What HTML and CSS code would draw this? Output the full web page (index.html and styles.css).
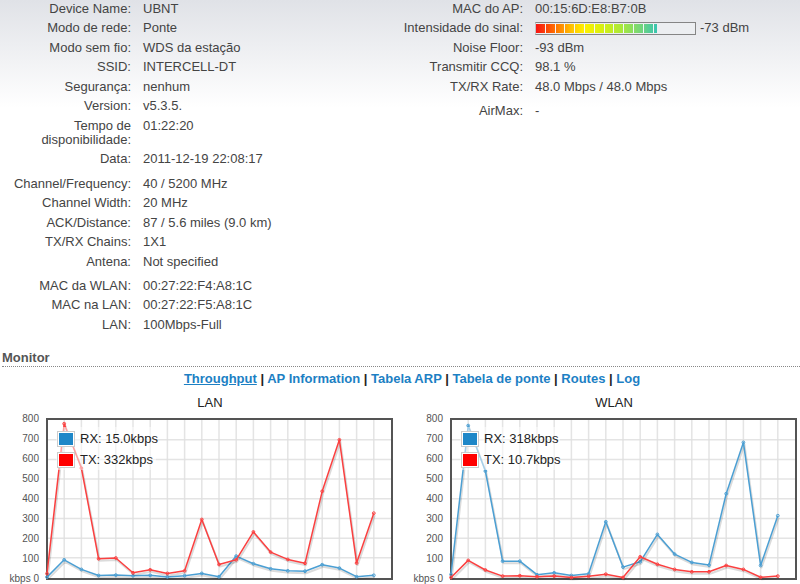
FILE: index.html
```html
<!DOCTYPE html>
<html lang="pt">
<head>
<meta charset="utf-8">
<title>UBNT</title>
<link rel="stylesheet" href="styles.css">
</head>
<body>
<main>
  <section class="status">
    <div class="column">
      <dl>
        <div class="row"><dt>Device Name:</dt><dd>UBNT</dd></div>
        <div class="row"><dt>Modo de rede:</dt><dd>Ponte</dd></div>
        <div class="row"><dt>Modo sem fio:</dt><dd>WDS da estação</dd></div>
        <div class="row"><dt>SSID:</dt><dd>INTERCELL-DT</dd></div>
        <div class="row"><dt>Segurança:</dt><dd>nenhum</dd></div>
        <div class="row"><dt>Version:</dt><dd>v5.3.5.</dd></div>
        <div class="row"><dt>Tempo de disponibilidade:</dt><dd>01:22:20</dd></div>
        <div class="row"><dt>Data:</dt><dd>2011-12-19 22:08:17</dd></div>
      </dl>
      <dl>
        <div class="row"><dt>Channel/Frequency:</dt><dd>40 / 5200 MHz</dd></div>
        <div class="row"><dt>Channel Width:</dt><dd>20 MHz</dd></div>
        <div class="row"><dt>ACK/Distance:</dt><dd>87 / 5.6 miles (9.0 km)</dd></div>
        <div class="row"><dt>TX/RX Chains:</dt><dd>1X1</dd></div>
        <div class="row"><dt>Antena:</dt><dd>Not specified</dd></div>
      </dl>
      <dl>
        <div class="row"><dt>MAC da WLAN:</dt><dd>00:27:22:F4:A8:1C</dd></div>
        <div class="row"><dt>MAC na LAN:</dt><dd>00:27:22:F5:A8:1C</dd></div>
        <div class="row"><dt>LAN:</dt><dd>100Mbps-Full</dd></div>
      </dl>
    </div>
    <div class="column">
      <dl>
        <div class="row"><dt>MAC do AP:</dt><dd>00:15:6D:E8:B7:0B</dd></div>
        <div class="row"><dt>Intensidade do sinal:</dt><dd class="signal"><span class="signal-bar"><span class="signal-fill"></span></span>-73 dBm</dd></div>
        <div class="row"><dt>Noise Floor:</dt><dd>-93 dBm</dd></div>
        <div class="row"><dt>Transmitir CCQ:</dt><dd>98.1 %</dd></div>
        <div class="row"><dt>TX/RX Rate:</dt><dd>48.0 Mbps / 48.0 Mbps</dd></div>
      </dl>
      <dl>
        <div class="row"><dt>AirMax:</dt><dd>-</dd></div>
      </dl>
    </div>
  </section>

  <section class="monitor">
    <h2>Monitor</h2>
    <nav>
      <a class="active" href="#throughput">Throughput</a> |
      <a href="#ap">AP Information</a> |
      <a href="#arp">Tabela ARP</a> |
      <a href="#bridge">Tabela de ponte</a> |
      <a href="#routes">Routes</a> |
      <a href="#log">Log</a>
    </nav>
    <div class="charts">
      <figure>
        <figcaption>LAN</figcaption>
        <svg class="chart" id="lan" viewBox="0 0 394 172"></svg>
      </figure>
      <figure>
        <figcaption>WLAN</figcaption>
        <svg class="chart" id="wlan" viewBox="0 0 394 172"></svg>
      </figure>
    </div>
  </section>
</main>
<script src="charts.js"></script>
</body>
</html>
```
FILE: styles.css
```css
body {
  margin: 0;
  background: #fff linear-gradient(#e0e2e7, #fff 108px) no-repeat;
  font-family: "Liberation Sans", Arial, sans-serif;
  font-size: 13px;
  line-height: 14px;
  color: #444;
}

main {
  overflow: hidden;
}

.status {
  display: grid;
  grid-template-columns: 1fr 1fr;
  padding: 2px 16px 0 0;
}

dl {
  margin: 0 0 5px;
}

.row {
  display: grid;
  grid-template-columns: 131px 1fr;
  column-gap: 12px;
  padding-bottom: 5px;
}

.row:nth-child(even) {
  padding-bottom: 6px;
}

dt {
  text-align: right;
}

dd {
  margin: 0;
}

.signal {
  display: flex;
  align-items: center;
  gap: 4px;
  white-space: nowrap;
}

.signal-bar {
  box-sizing: border-box;
  width: 161px;
  height: 13px;
  padding: 1px 0;
  border: 1px solid #858585;
  border-left-color: #c4c4c4;
  background: #eceef1;
}

.signal-fill {
  display: block;
  width: 121px;
  height: 9px;
  background:
    repeating-linear-gradient(90deg, transparent 0 7.3%, #f4f5f6 7.3% 8.1%),
    linear-gradient(90deg, #f81414, #ff6a00 18px, #ffc400 36px, #fff000 48px, #d8f010 66px, #a8e83c 86px, #70d480 106px, #38c4b0);
}

h2 {
  margin: 9px 0 0 2px;
  padding-bottom: 1px;
  border-bottom: 1px dotted #888;
  font-size: 13px;
  line-height: 14px;
  color: #555;
}

nav {
  padding: 5px 0 0 24px;
  text-align: center;
  font-weight: bold;
  color: #222;
}

a {
  color: #1c80c4;
  text-decoration: none;
}

.active {
  text-decoration: underline;
}

.charts {
  display: grid;
  grid-template-columns: 1fr 1fr;
  column-gap: 10px;
  padding: 10px 2px 0 0;
}

figure {
  margin: 0;
}

figcaption {
  padding: 0 0 2px 26px;
  text-align: center;
  color: #222;
}

.chart {
  display: block;
  width: 100%;
}

.grid {
  stroke: #e0e0e0;
  stroke-width: 1.5;
  opacity: 0.85;
}

.frame {
  fill: none;
  stroke: #545454;
  stroke-width: 2;
}

.tick {
  font-size: 10px;
  text-anchor: end;
  fill: #545454;
}

.series {
  fill: none;
  stroke-width: 1.5;
  stroke-linejoin: round;
}

.shadow {
  stroke: #000;
  stroke-width: 2;
  opacity: 0.14;
}

.rx {
  stroke: #4b9fd3;
}

.tx {
  stroke: #fb4040;
}

.point {
  fill: none;
  stroke-width: 1;
}

.legend-back {
  fill: #fff;
  opacity: 0.5;
}

.legend-box {
  fill: #fff;
  stroke: #ccc;
}

.swatch-rx {
  fill: #1e87c8;
}

.swatch-tx {
  fill: #f00;
}

.legend-text {
  fill: #222;
}
```
FILE: charts.js
```js
const LEFT = 47, STEP = 17.2, ZERO = 165.5, SCALE = 0.1967;
const x = i => LEFT + i * STEP;
const y = v => ZERO - v * SCALE;

function series(values, name) {
  const line = values.map((v, i) => `${x(i).toFixed(1)},${y(v).toFixed(1)}`).join(' ');
  const points = values.map((v, i) =>
    `<circle class="point ${name}" cx="${x(i).toFixed(1)}" cy="${y(v).toFixed(1)}" r="1.4"/>`).join('');
  return `<polyline class="series shadow" points="${line}" transform="translate(1 2)"/>
    <polyline class="series ${name}" points="${line}"/>${points}`;
}

function legend(name, label, top) {
  return `<rect class="legend-box" x="57.5" y="${top - 1.5}" width="17" height="15"/>
    <rect class="swatch-${name}" x="59" y="${top}" width="14" height="12"/>
    <text class="legend-text" x="80" y="${top + 10}">${label}</text>`;
}

function draw(id, rx, tx, rxLabel, txLabel) {
  let out = '';
  for (let i = 1; i < 20; i++) out += `<path class="grid" d="M${x(i).toFixed(1)} 8V166"/>`;
  for (let v = 100; v < 800; v += 100) out += `<path class="grid" d="M48 ${y(v).toFixed(1)}H391"/>`;
  for (let v = 0; v <= 800; v += 100) {
    out += `<text class="tick" x="39" y="${170 - v / 5}">${v ? v : 'kbps 0'}</text>`;
  }
  out += '<rect class="frame" x="47" y="7" width="345" height="160"/>';
  out += series(rx, 'rx') + series(tx, 'tx');
  out += '<rect class="legend-back" x="56" y="15" width="100" height="43"/>';
  out += legend('rx', rxLabel, 21) + legend('tx', txLabel, 42);
  document.getElementById(id).innerHTML = out;
}

draw('lan',
  [2, 90, 41, 10, 12, 9, 11, 3, 9, 21, 4, 109, 70, 44, 34, 32, 65, 48, 4, 11],
  [20, 782, 556, 95, 99, 24, 39, 21, 34, 295, 66, 90, 232, 129, 92, 72, 438, 700, 73, 327],
  'RX: 15.0kbps', 'TX: 332kbps');
draw('wlan',
  [15, 772, 541, 83, 83, 14, 24, 10, 19, 283, 53, 80, 219, 119, 77, 63, 426, 687, 61, 314],
  [0, 87, 38, 7, 9, 4, 7, 0, 6, 17, 0, 105, 67, 41, 29, 29, 61, 41, 1, 7],
  'RX: 318kbps', 'TX: 10.7kbps');
```
